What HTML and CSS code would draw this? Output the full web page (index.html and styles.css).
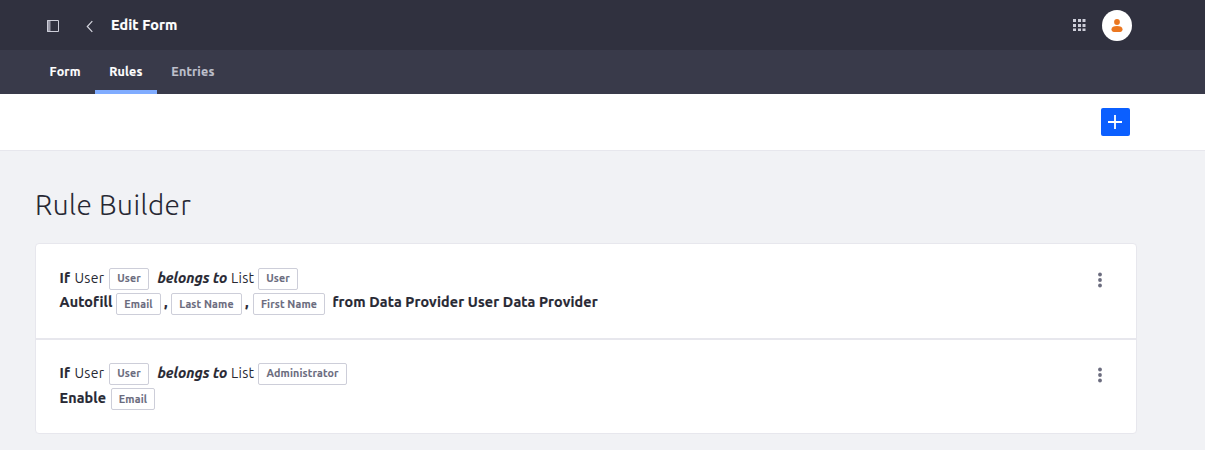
FILE: index.html
```html
<!DOCTYPE html>
<html lang="en">
<head>
<meta charset="utf-8">
<title>Edit Form</title>
<link rel="stylesheet" href="styles.css">
</head>
<body>
<header class="topbar">
  <svg class="panel-icon" width="13" height="13" viewBox="0 0 13 13"><path d="M0 0h3.500v12H0z" fill="#9c9caa"/><path d="M.5.5h11v11H.5z" fill="none" stroke="#cdced9"/></svg>
  <svg class="back-icon" width="8" height="13" viewBox="0 0 8 13"><path d="M6.300 1.200 1.300 6.500l5 5.300" fill="none" stroke="#d5d6df" stroke-width="1.200"/></svg>
  <h1 class="page-name">Edit Form</h1>
  <svg class="apps-icon" width="13" height="13" viewBox="0 0 13 13" fill="#cdced9"><path d="M0 0h3v3H0zM5 0h3v3H5zM9.500 0h3v3h-3zM0 5h3v3H0zM5 5h3v3H5zM9.500 5h3v3h-3zM0 9.500h3v2.500H0zM5 9.500h3v2.500H5zM9.500 9.500h3v2.500h-3z"/></svg>
  <span class="avatar"><svg width="12" height="14" viewBox="0 0 12 14" fill="#eb7720"><circle cx="6" cy="3" r="2.900"/><path d="M.5 10.300C.5 8 2.700 7 6 7s5.500 1 5.500 3.300c0 1.700-1 2.700-2.400 2.700H2.900C1.500 13 .5 12 .5 10.300z"/></svg></span>
</header>
<nav class="tabs">
  <a class="tab form"><span>Form</span></a>
  <a class="tab rules active"><span>Rules</span></a>
  <a class="tab entries"><span>Entries</span></a>
</nav>
<div class="toolbar">
  <button class="add" aria-label="Add"><svg width="15" height="14" viewBox="0 0 15 14"><path d="M7 0v14M0 7h14" stroke="#fff" stroke-width="1.800"/></svg></button>
</div>
<main class="content">
  <h2 class="title">Rule Builder</h2>
  <ul class="rules-list">
    <li class="rule">
      <div class="line">
        <b class="w-if">If</b><span class="w-user">User</span><span class="tag t-user">User</span><b class="w-belongs">belongs to</b><span class="w-list">List</span><span class="tag t-user">User</span>
      </div>
      <div class="line second">
        <b class="w-autofill">Autofill</b><span class="tag t-email">Email</span><b class="comma">,</b><span class="tag t-last">Last Name</span><b class="comma">,</b><span class="tag t-first">First Name</span><b class="w-from">from Data Provider User Data Provider</b>
      </div>
      <svg class="kebab" width="4" height="16" viewBox="0 0 4 16" fill="#6b6c7e"><circle cx="2" cy="2.500" r="1.900"/><circle cx="2" cy="8" r="1.900"/><circle cx="2" cy="13.500" r="1.900"/></svg>
    </li>
    <li class="rule">
      <div class="line">
        <b class="w-if">If</b><span class="w-user">User</span><span class="tag t-user">User</span><b class="w-belongs">belongs to</b><span class="w-list">List</span><span class="tag t-admin">Administrator</span>
      </div>
      <div class="line second">
        <b class="w-enable">Enable</b><span class="tag t-email2">Email</span>
      </div>
      <svg class="kebab" width="4" height="16" viewBox="0 0 4 16" fill="#6b6c7e"><circle cx="2" cy="2.500" r="1.900"/><circle cx="2" cy="8" r="1.900"/><circle cx="2" cy="13.500" r="1.900"/></svg>
    </li>
  </ul>
</main>
</body>
</html>
```
FILE: styles.css
```css
* { box-sizing: border-box; }
body {
  margin: 0;
  height: 450px;
  overflow: hidden;
  background: #f1f2f5;
  color: #272833;
  font-family: Ubuntu, "Noto Sans", "Open Sans", sans-serif;
  font-size: 14px;
  white-space: nowrap;
}
.topbar {
  display: flex;
  align-items: center;
  height: 50px;
  padding: 0 73px 0 47px;
  background: #30313f;
}
.panel-icon { margin-top: 2px; }
.back-icon { margin: 3px 0 0 25.500px; }
.page-name {
  margin: 0 0 0 17.500px;
  color: #fff;
  font-size: 14.3px;
  line-height: 20px;
  font-weight: 700;
  letter-spacing: .15px;
  -webkit-text-stroke: .2px;
}
.apps-icon { margin-left: auto; margin-top: 1px; }
.avatar {
  display: flex;
  align-items: center;
  justify-content: center;
  width: 30px;
  height: 31px;
  margin: 1px 0 0 16px;
  border-radius: 50%;
  background: #fff;
}
.tabs {
  display: flex;
  height: 44px;
  padding-left: 35px;
  background: #393a4a;
}
.tab {
  padding: 11px 0 0 14.500px;
  color: #fff;
  font-size: 12.5px;
  line-height: 20px;
  font-weight: 700;
  letter-spacing: .2px;
  -webkit-text-stroke: .15px;
}
.form { width: 60px; }
.rules { width: 62px; padding-left: 14.300px; }
.entries { padding-left: 14.300px; color: #bfc0cc; }
.active { border-bottom: 4px solid #80acff; }
.toolbar {
  display: flex;
  justify-content: flex-end;
  height: 57px;
  padding: 14px 75px 0 0;
  background: #fff;
  border-bottom: 1px solid #e7e7ed;
}
.add {
  display: flex;
  align-items: center;
  justify-content: center;
  width: 29px;
  height: 28px;
  padding: 0;
  border: 0;
  border-radius: 2px;
  background: #0b5fff;
}
.content { padding: 34px 68px 0 35px; }
.title {
  margin: 0;
  height: 58px;
  font-size: 28px;
  line-height: 40px;
  font-weight: 300;
  letter-spacing: .45px;
}
.rules-list {
  margin: 0;
  padding: 0;
  list-style: none;
  background: #fff;
  border: 1px solid #e7e7ed;
  border-radius: 4px;
}
.rule {
  position: relative;
  height: 94px;
  padding: 24px 0 0 23.500px;
}
.rule + .rule {
  height: 95px;
  border-top: 2px solid #e7e7ed;
  padding-top: 23px;
}
.line {
  display: flex;
  height: 22px;
  line-height: 20px;
}
.second { margin-top: 3px; line-height: 18px; }
.rule + .rule .second { line-height: 20px; }
.line b {
  font-size: 14.3px;
  font-weight: 700;
  letter-spacing: .16px;
  -webkit-text-stroke: .2px;
}
.tag {
  height: 22px;
  border: 1px solid #cdced9;
  border-radius: 2px;
  color: #6b6c7e;
  font-size: 10.7px;
  line-height: 19px;
  font-weight: 700;
  letter-spacing: .15px;
  text-align: center;
  -webkit-text-stroke: .1px;
}
.second .tag,
.rule + .rule .second .tag { line-height: 20px; }
.w-if { width: 15px; }
.w-user { width: 34.500px; letter-spacing: .3px; }
.t-user { width: 40px; }
.line .w-belongs { width: 73.500px; margin-left: 8.500px; font-style: italic; letter-spacing: .05px; }
.w-list { width: 27px; letter-spacing: .3px; }
.t-admin { width: 89px; }
.w-autofill { width: 56.500px; }
.t-email { width: 45px; }
.comma { width: 10px; padding-left: 3px; }
.t-last { width: 71px; }
.comma ~ .comma { width: 11px; }
.t-first { width: 72px; }
.w-from { margin-left: 7.500px; }
.w-enable { width: 51.500px; }
.t-email2 { width: 44px; }
.kebab { position: absolute; top: 28px; right: 34px; }
.rule + .rule .kebab { top: 27px; }
```
